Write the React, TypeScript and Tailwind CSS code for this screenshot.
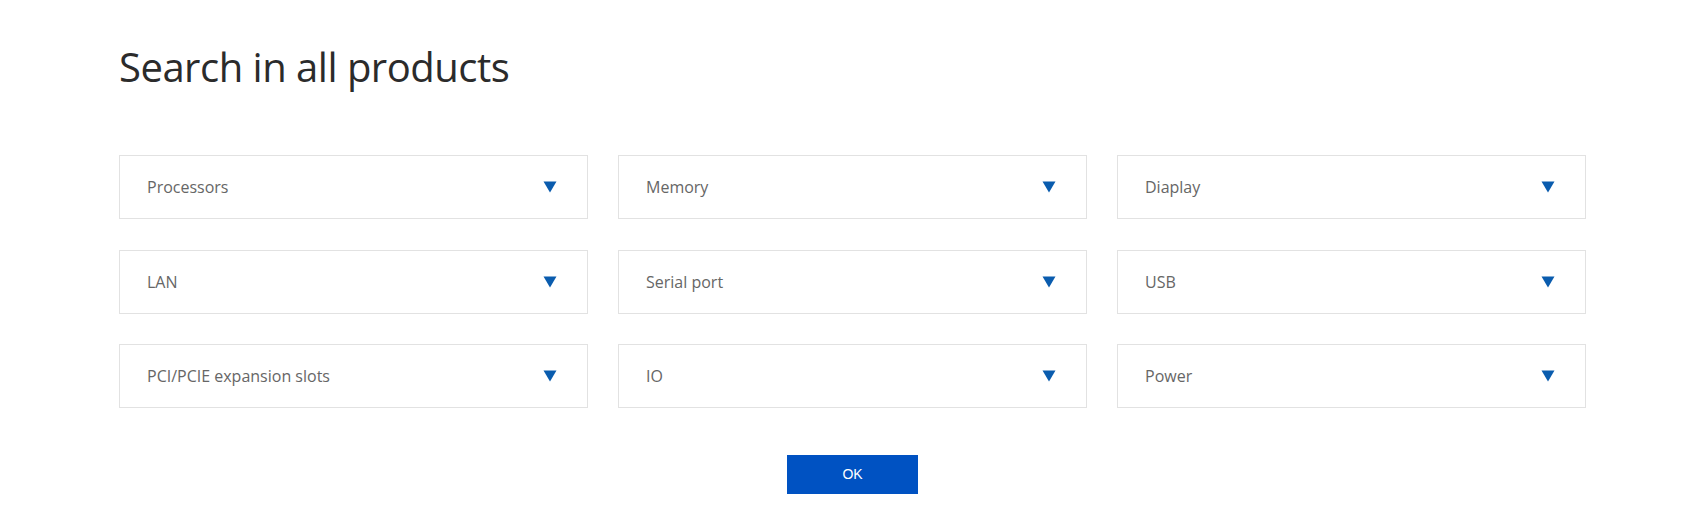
const fields = [
  "Processors",
  "Memory",
  "Diaplay",
  "LAN",
  "Serial port",
  "USB",
  "PCI/PCIE expansion slots",
  "IO",
  "Power",
];

function Caret() {
  return (
    <svg width="14" height="12" viewBox="0 0 14 12" className="shrink-0">
      <path d="M0.5 0.5 H13.5 L7 11.5 Z" fill="#0a5cae" />
    </svg>
  );
}

export default function App() {
  return (
    <div className="min-h-[528px] w-full bg-white font-['Open_Sans','Noto_Sans',sans-serif]">
      <div className="w-[1467px] ml-[119px] pt-[40px]">
        <h1 className="text-[40px] leading-[54px] text-[#2b2b2b] font-normal tracking-[-0.5px]">
          Search in all products
        </h1>

        <div className="mt-[61px] grid grid-cols-3 gap-x-[30px] gap-y-[30.5px]">
          {fields.map((f) => (
            <button
              key={f}
              type="button"
              className="h-[64px] flex items-center justify-between pl-[27px] pr-[30px] border border-[#e2e2e2] bg-white text-left"
            >
              <span className="text-[16px] text-[#666666]">{f}</span>
              <Caret />
            </button>
          ))}
        </div>

        <div className="mt-[47px] flex justify-center">
          <button
            type="button"
            className="w-[131px] h-[39px] bg-[#0052c2] text-white text-[14px] font-['Liberation_Sans',sans-serif]"
          >
            OK
          </button>
        </div>
      </div>
    </div>
  );
}
